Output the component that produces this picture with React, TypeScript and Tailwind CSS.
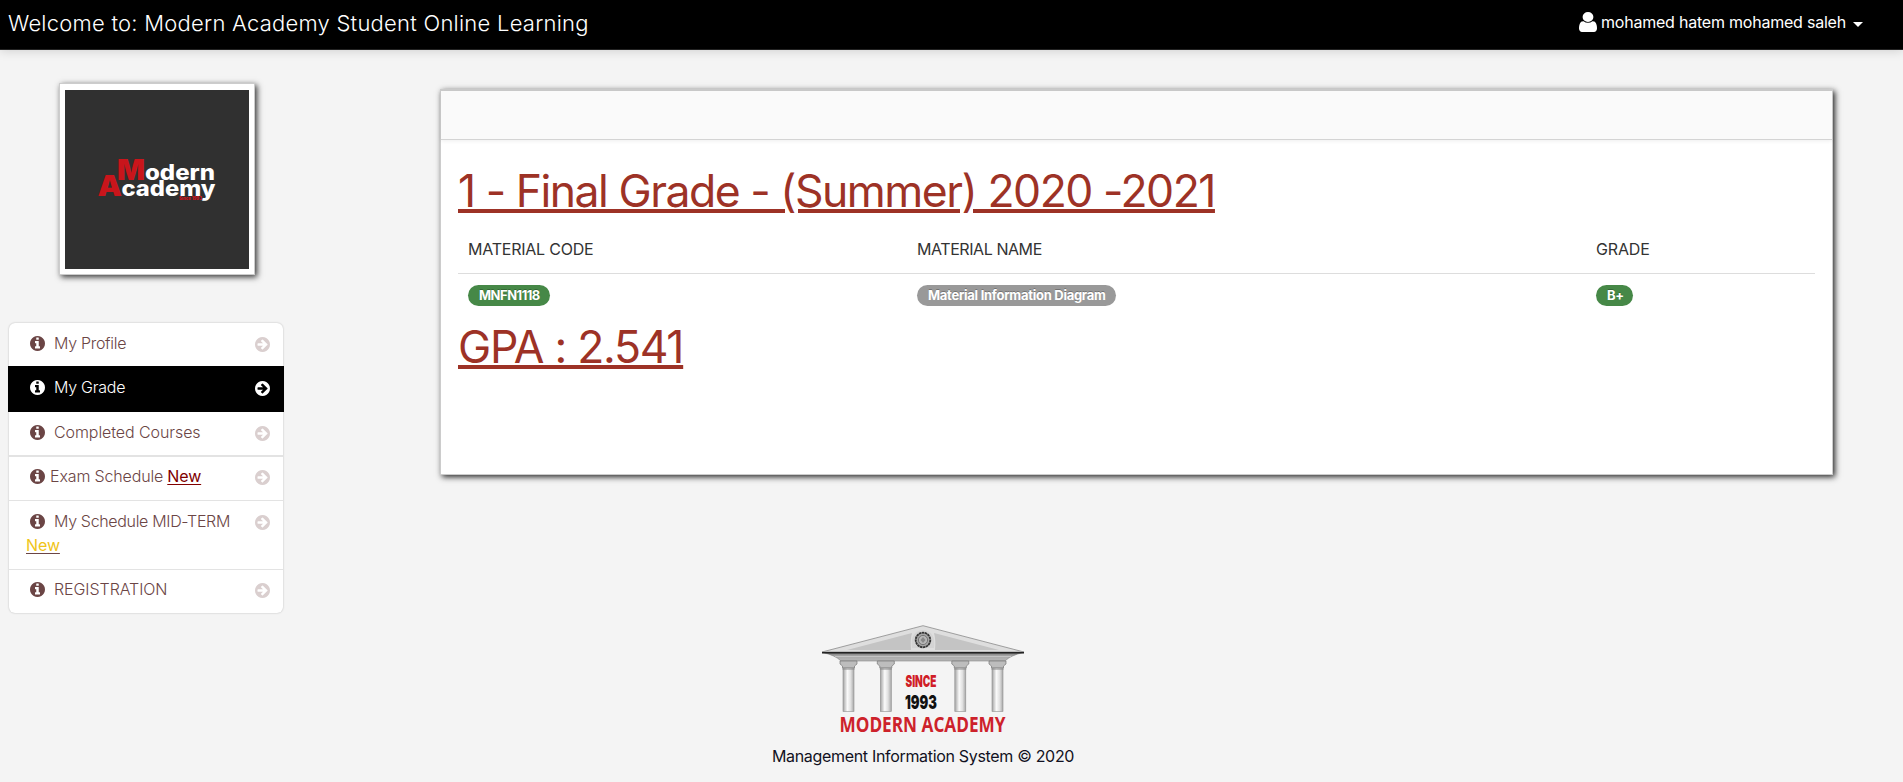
import type { ReactNode } from "react";

const INFO =
  "M1152 1376v-160q0-14-9-23t-23-9h-96v-512q0-14-9-23t-23-9h-320q-14 0-23 9t-9 23v160q0 14 9 23t23 9h96v320h-96q-14 0-23 9t-9 23v160q0 14 9 23t23 9h448q14 0 23-9t9-23zm-128-896v-160q0-14-9-23t-23-9h-192q-14 0-23 9t-9 23v160q0 14 9 23t23 9h192q14 0 23-9t9-23zm640 416q0 209-103 385.5t-279.5 279.5-385.5 103-385.5-103-279.5-279.5-103-385.5 103-385.5 279.5-279.5 385.5-103 385.5 103 279.5 279.5 103 385.5z";
const ARROW =
  "M1413 896q0-27-18-45l-91-91-362-362q-18-18-45-18t-45 18l-91 91q-18 18-18 45t18 45l189 189h-502q-26 0-45 19t-19 45v128q0 26 19 45t45 19h502l-189 189q-18 18-18 45t18 45l91 91q18 18 45 18t45-18l362-362 91-91q18-18 18-45zm251 0q0 209-103 385.5t-279.5 279.5-385.5 103-385.5-103-279.5-279.5-103-385.5 103-385.5 279.5-279.5 385.5-103 385.5 103 279.5 279.5 103 385.5z";
const USER =
  "M1536 1399q0 109-62.5 187t-150.5 78h-854q-88 0-150.5-78t-62.5-187q0-85 8.5-160.5t31.5-152 58.5-131 94-89 134.5-34.5q131 128 313 128t313-128q76 0 134.5 34.5t94 89 58.5 131 31.5 152 8.5 160.5zm-256-887q0 159-112.5 271.5t-271.5 112.5-271.5-112.5-112.5-271.5 112.5-271.5 271.5-112.5 271.5 112.5 112.5 271.5z";

function MenuItem({ className, active, children }: { className: string; active?: boolean; children: ReactNode }) {
  return (
    <li
      className={`flex items-start justify-between whitespace-nowrap text-[16px] leading-[24px] font-light ${
        active ? "-mx-px bg-black pl-[18px] pr-[14px] text-white" : "pl-[17px] pr-[13px] text-[#6b4545]"
      } ${className}`}
    >
      <div>{children}</div>
      <svg viewBox="128 128 1536 1536" className={`mt-[6px] size-[15px] shrink-0 ${active ? "text-white" : "text-[#dacfcf]"}`}>
        <path d={ARROW} fill="currentColor" />
      </svg>
    </li>
  );
}

function Info({ className }: { className: string }) {
  return (
    <svg viewBox="128 128 1536 1536" className={`ml-[4px] inline-block size-[15px] align-[-2px] ${className}`}>
      <path d={INFO} fill="currentColor" />
    </svg>
  );
}

function Badge({ className, children }: { className: string; children: ReactNode }) {
  return (
    <span
      className={`block h-[21px] rounded-full pl-[11px] text-[13px] leading-[21px] font-bold whitespace-nowrap text-white [text-shadow:0_-1px_0_rgba(0,0,0,0.25)] ${className}`}
    >
      {children}
    </span>
  );
}

function AcademyMark() {
  return (
    <svg viewBox="0 0 184 179" className="h-[179px] w-[184px] bg-[#303030] font-black">
      <g fill="#c9151b">
        <text x="52" y="89.5" fontSize="28" textLength="28" lengthAdjust="spacingAndGlyphs">M</text>
        <text x="32.5" y="106" fontSize="29" textLength="24.5" lengthAdjust="spacingAndGlyphs">A</text>
        <text x="114" y="110" fontSize="4.5" textLength="23" lengthAdjust="spacingAndGlyphs">Since 1993</text>
      </g>
      <g fill="#fff" fontSize="21" className="font-extrabold">
        <text x="80" y="89.5" textLength="70" lengthAdjust="spacingAndGlyphs">odern</text>
        <text x="56.5" y="105.5" textLength="94" lengthAdjust="spacingAndGlyphs">cademy</text>
      </g>
    </svg>
  );
}

function Column({ x }: { x: number }) {
  return (
    <g transform={`translate(${x} 0)`}>
      <path d="M-8.5 36H8.5V39L6 41V43H-6V41L-8.5 39Z" fill="#bdbdbd" stroke="#777" strokeWidth="0.7" />
      <rect x="-5.5" y="43" width="11" height="43.5" fill="url(#shaft)" stroke="#909090" strokeWidth="0.6" />
      <path d="M-6 44H6" stroke="#888" />
    </g>
  );
}

function FooterLogo() {
  return (
    <svg viewBox="0 0 204 112" className="h-[112px] w-[204px]">
      <defs>
        <linearGradient id="shaft">
          <stop offset="0" stopColor="#a2a2a2" />
          <stop offset="0.4" stopColor="#fafafa" />
          <stop offset="0.7" stopColor="#e0e0e0" />
          <stop offset="1" stopColor="#a6a6a6" />
        </linearGradient>
        <linearGradient id="beam" x2="0" y2="1">
          <stop offset="0" stopColor="#707070" />
          <stop offset="0.4" stopColor="#a8a8a8" />
          <stop offset="1" stopColor="#b8b8b8" />
        </linearGradient>
      </defs>
      <path d="M1 27L102 0.7L203 27Z" fill="#dedede" stroke="#8a8a8a" strokeWidth="0.8" />
      <path d="M26 25L91 8Q89 15 90 25Z" fill="#c4c4c4" />
      <path d="M178 25L113 8Q115 15 114 25Z" fill="#c4c4c4" />
      <path d="M1 27.5H203Q190 30 184 36H20Q14 30 1 27.5Z" fill="url(#beam)" stroke="#777" strokeWidth="0.5" />
      <path d="M1 27.7H203" stroke="#222" strokeWidth="1.6" />
      <path d="M14 31.5H190" stroke="#d0d0d0" strokeWidth="0.7" />
      <path d="M91 23Q89 6 102 5Q115 6 113 23Z" fill="#d4d4d4" />
      <circle cx="102" cy="15" r="7.3" fill="#a7a7a7" stroke="#333" strokeWidth="1.8" strokeDasharray="2.5 0.5" />
      <circle cx="102" cy="15" r="4.6" fill="#b7b7b7" stroke="#666" strokeWidth="0.8" />
      <path d="M99.5 15L102 12L104.5 15L102 18Z" fill="#888" />
      <Column x={27.5} />
      <Column x={64.8} />
      <Column x={139.3} />
      <Column x={176.5} />
      <g className="font-black">
        <text x="84.5" y="61.5" fontSize="16.5" fill="#d01d27" textLength="31" lengthAdjust="spacingAndGlyphs">SINCE</text>
        <text x="84" y="84" fontSize="19" fill="#111" textLength="32" lengthAdjust="spacingAndGlyphs">1993</text>
      </g>
      <text x="18.5" y="107" fontSize="20.5" fill="#cd222b" textLength="166" lengthAdjust="spacingAndGlyphs" className="font-['Open_Sans',sans-serif] font-bold">
        MODERN ACADEMY
      </text>
    </svg>
  );
}

export default function App() {
  return (
    <div className="flex h-[782px] w-[1903px] flex-col overflow-hidden bg-[#f4f4f4] font-[Inter,'Liberation_Sans',sans-serif]">
      <header className="relative flex h-[50px] shrink-0 items-start justify-between border-b border-[#222] bg-black pr-[40px] pl-[8px] text-white shadow-[0_1px_10px_rgba(0,0,0,0.15)]">
        <h1 className="pt-[9px] text-[22px] leading-[28px] font-light tracking-[0.24px] whitespace-nowrap">
          Welcome to: Modern Academy Student Online Learning
        </h1>
        <div className="flex h-[32px] items-end">
          <svg viewBox="256 128 1280 1536" preserveAspectRatio="none" className="h-[20px] w-[18px]">
            <path d={USER} fill="currentColor" />
          </svg>
          <span className="ml-[4px] w-[252px] text-[16px] leading-[20px] tracking-[-0.22px] whitespace-nowrap">
            mohamed hatem mohamed saleh
          </span>
          <svg viewBox="0 0 10 5" className="mb-[5px] h-[5px] w-[10px]">
            <path d="M0 0H10L5 5Z" fill="currentColor" />
          </svg>
        </div>
      </header>

      <div className="flex h-[564px] shrink-0 items-start">
        <aside className="flex w-[440px] shrink-0 flex-col">
          <div className="mt-[33px] ml-[59px] h-[192px] w-[196px] border border-[#ccc] bg-white px-[5px] pt-[6px] shadow-[2px_2px_6px_rgba(0,0,0,0.8)]">
            <AcademyMark />
          </div>
          <ul className="mt-[48px] ml-[9px] h-[290px] w-[274px] rounded-[6px] bg-white shadow-[0_0_2px_rgba(0,0,0,0.25)]">
            <MenuItem className="h-[43px] pt-[8px]">
              <Info className="mr-[9px]" />
              <span className="tracking-[-0.3px]">My Profile</span>
            </MenuItem>
            <MenuItem active className="h-[46px] pt-[9px]">
              <Info className="mr-[9px]" />
              <span className="tracking-[-0.25px]">My Grade</span>
            </MenuItem>
            <MenuItem className="h-[45px] border-b-2 border-[#e3e3e3] pt-[8px]">
              <Info className="mr-[9px]" />
              <span className="tracking-[-0.08px]">Completed Courses</span>
            </MenuItem>
            <MenuItem className="h-[44px] border-b border-[#e3e3e3] pt-[7px]">
              <Info className="mr-[5px]" />
              <span className="tracking-[-0.14px]">Exam Schedule</span>
              <span className="ml-[4px] font-normal tracking-[-0.1px] text-[#800000] underline underline-offset-2">New</span>
            </MenuItem>
            <MenuItem className="h-[69px] border-b border-[#e3e3e3] pt-[8px]">
              <Info className="mr-[9px]" />
              <span className="tracking-[-0.33px]">My Schedule MID-TERM</span>
              <br />
              <span className="font-normal tracking-[-0.1px] text-[#f0c419] underline decoration-[#6b4545] underline-offset-2">New</span>
            </MenuItem>
            <MenuItem className="h-[43px] pt-[7px]">
              <Info className="mr-[9px]" />
              <span className="tracking-[-0.07px]">REGISTRATION</span>
            </MenuItem>
          </ul>
        </aside>

        <main className="mt-[39px] h-[386px] w-[1393px] border border-t-2 border-[#ccc] bg-white shadow-[2px_2px_6px_rgba(0,0,0,0.85)]">
          <div className="h-[49px] border-b border-[#d4d4d4] bg-[#fafafa] shadow-[0_1px_4px_rgba(0,0,0,0.07)]" />
          <div className="pr-[17px] pl-[17px] pt-[24px]">
            <h2 className="h-[61px] text-[44.5px] leading-[54px] tracking-[-1.48px] whitespace-nowrap text-[#9d3226] underline decoration-[4px] underline-offset-[2px]">
              1 - Final Grade - (Summer) 2020 -2021
            </h2>
            <div className="grid h-[49px] grid-cols-[449px_679px_1fr] border-b border-[#ddd] px-[10px] pt-[12px] text-[16px] leading-[24px] text-[#333]">
              <span className="tracking-[-0.23px]">MATERIAL CODE</span>
              <span className="tracking-[-0.43px]">MATERIAL NAME</span>
              <span className="tracking-[-0.15px]">GRADE</span>
            </div>
            <div className="grid h-[39px] grid-cols-[449px_679px_1fr] pt-[11px] pl-[10px]">
              <Badge className="w-[82px] bg-[#468847] tracking-[-0.5px]">MNFN1118</Badge>
              <Badge className="w-[199px] bg-[#999] tracking-[-0.27px]">Material Information Diagram</Badge>
              <Badge className="w-[37px] bg-[#468847] tracking-[-0.3px]">B+</Badge>
            </div>
            <h2 className="mt-[7px] text-[44.5px] leading-[54px] tracking-[-1.28px] whitespace-nowrap text-[#9d3226] underline decoration-[4px] underline-offset-[2px]">
              GPA : 2.541
            </h2>
          </div>
        </main>
      </div>

      <footer className="flex w-[1846px] flex-col items-center pt-[11px]">
        <FooterLogo />
        <p className="mt-[7px] text-[16px] leading-[24px] tracking-[-0.32px] text-[#111122]">Management Information System © 2020</p>
      </footer>
    </div>
  );
}
